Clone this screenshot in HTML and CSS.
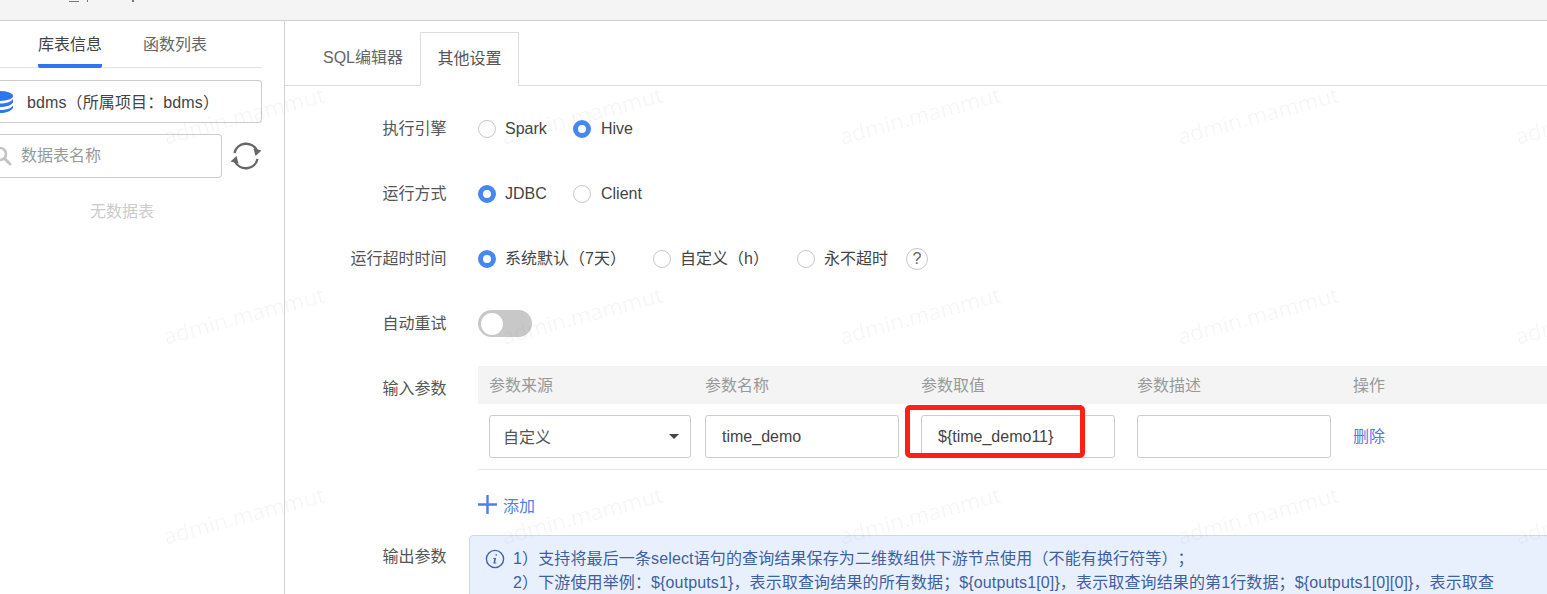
FILE: index.html
```html
<!DOCTYPE html>
<html lang="zh-CN">
<head>
<meta charset="utf-8">
<title>其他设置</title>
<link rel="stylesheet" href="styles.css">
</head>
<body>
<div class="page">
  <header class="topbar">
    <i class="mark mark-a"></i><i class="mark mark-b"></i><i class="mark mark-c"></i>
  </header>
  <div class="layout">
    <aside class="sidebar">
      <nav class="side-tabs">
        <span class="side-tab active">库表信息</span>
        <span class="side-tab">函数列表</span>
      </nav>
      <div class="db-box">
        <svg class="db-icon" viewBox="0 0 26 22" width="26" height="22"><ellipse cx="13" cy="5" rx="13" ry="5" fill="#2f74f0"/><path d="M0 8c2 3 7 4.500 13 4.500S24 11 26 8v3.500c-2 3-7 4.500-13 4.500S2 14.500 0 11.500z" fill="#2f74f0"/><path d="M0 14.500c2 3 7 4.500 13 4.500s11-1.500 13-4.500V17c-2 3-7 5-13 5S2 20 0 17z" fill="#2f74f0"/></svg>
        <span class="db-name">bdms（所属项目：bdms）</span>
      </div>
      <div class="search-row">
        <div class="search-box">
          <svg class="search-icon" viewBox="0 0 20 20" width="20" height="20"><circle cx="8" cy="8" r="6" fill="none" stroke="#c4c4c4" stroke-width="2.600"/><path d="M12.500 12.500L18 18" stroke="#c4c4c4" stroke-width="3" stroke-linecap="round"/></svg>
          <span>数据表名称</span>
        </div>
        <svg class="refresh" viewBox="0 0 32 32" width="32" height="32"><path d="M4.500 13A12 12 0 0 1 27 10.500" fill="none" stroke="#666" stroke-width="2.400"/><path d="M27.500 19A12 12 0 0 1 5 21.500" fill="none" stroke="#666" stroke-width="2.400"/><path d="M31.500 10.500L25.500 16L23.500 8.500z" fill="#666"/><path d="M0.500 21.500L6.500 16L8.500 23.500z" fill="#666"/></svg>
      </div>
      <p class="empty">无数据表</p>
    </aside>
    <main class="content">
      <nav class="main-tabs">
        <span class="main-tab">SQL编辑器</span>
        <span class="main-tab active">其他设置</span>
      </nav>
      <section class="form">
        <div class="row">
          <label class="label">执行引擎</label>
          <div class="radios">
            <span class="radio r-first"><i class="dot"></i>Spark</span>
            <span class="radio"><i class="dot on"></i>Hive</span>
          </div>
        </div>
        <div class="row">
          <label class="label">运行方式</label>
          <div class="radios">
            <span class="radio r-first"><i class="dot on"></i>JDBC</span>
            <span class="radio"><i class="dot"></i>Client</span>
          </div>
        </div>
        <div class="row">
          <label class="label">运行超时时间</label>
          <div class="radios">
            <span class="radio r-wide"><i class="dot on"></i>系统默认（7天）</span>
            <span class="radio r-wide2"><i class="dot"></i>自定义（h）</span>
            <span class="radio"><i class="dot"></i>永不超时</span>
            <span class="help">?</span>
          </div>
        </div>
        <div class="row">
          <label class="label">自动重试</label>
          <span class="switch"><i class="knob"></i></span>
        </div>
        <div class="row row-table">
          <label class="label label-table">输入参数</label>
          <div class="table">
            <div class="thead">
              <span>参数来源</span><span>参数名称</span><span>参数取值</span><span>参数描述</span><span>操作</span>
            </div>
            <div class="tbody">
              <div class="cell"><div class="field select"><span class="select-value">自定义</span><i class="caret"></i></div></div>
              <div class="cell"><div class="field">time_demo</div></div>
              <div class="cell highlight-cell"><div class="field">${time_demo11}</div><i class="redbox"></i></div>
              <div class="cell"><div class="field"></div></div>
              <div class="cell"><a class="link">删除</a></div>
            </div>
            <div class="add">
              <svg viewBox="0 0 19 19" width="19" height="19"><path d="M9.500 0v19M0 9.500h19" stroke="#4f7fe6" stroke-width="2.400"/></svg>
              <span>添加</span>
            </div>
          </div>
        </div>
        <div class="row row-output">
          <label class="label label-output">输出参数</label>
          <div class="alert">
            <svg class="info" viewBox="0 0 20 20" width="20" height="20"><circle cx="10" cy="10" r="8.600" fill="none" stroke="#3f63b5" stroke-width="1.400"/><path d="M10.600 5.200h1.300v1.500h-1.300zM8.400 9h2.700l-1 4.600h1.300v.9H8.300l1-4.600H8.200z" fill="#3f63b5"/></svg>
            <div class="alert-text">
              <p>1）支持将最后一条select语句的查询结果保存为二维数组供下游节点使用（不能有换行符等）；</p>
              <p>2）下游使用举例：${outputs1}，表示取查询结果的所有数据；${outputs1[0]}，表示取查询结果的第1行数据；${outputs1[0][0]}，表示取查</p>
            </div>
          </div>
        </div>
      </section>
    </main>
  </div>
  <div class="watermarks" aria-hidden="true">
    <span>admin.mammut</span><span>admin.mammut</span><span>admin.mammut</span><span>admin.mammut</span><span>admin.mammut</span>
    <span>admin.mammut</span><span>admin.mammut</span><span>admin.mammut</span><span>admin.mammut</span><span>admin.mammut</span>
    <span>admin.mammut</span><span>admin.mammut</span><span>admin.mammut</span><span>admin.mammut</span><span>admin.mammut</span>
  </div>
</div>
</body>
</html>
```
FILE: styles.css
```css
* { box-sizing: border-box; }
html, body { margin: 0; padding: 0; overflow: hidden; background: #fff; }
body { font: 16px/24px "Liberation Sans", "Noto Sans CJK SC", sans-serif; color: #555; text-spacing-trim: space-all; }
p { margin: 0; }
.page { position: relative; width: 1547px; height: 594px; overflow: hidden; }

.topbar { height: 21px; background: #f4f4f4; border-bottom: 1px solid #cfcfcf; display: flex; align-items: flex-start; }
.mark { display: block; background: #777; }
.mark-a { width: 10px; height: 1px; margin: 1px 8px 0 69px; }
.mark-b { width: 1px; height: 2px; margin-right: 44px; }
.mark-c { width: 2px; height: 2px; }

.layout { display: flex; height: 573px; }
.sidebar { width: 285px; flex: none; border-right: 1px solid #d2d2d2; padding-right: 22px; }
.side-tabs { display: flex; gap: 41px; height: 47px; margin-bottom: 12px; padding-left: 38px; border-bottom: 1px solid #e2e2ea; }
.side-tab { height: 46px; padding-top: 12px; color: #666; position: relative; }
.side-tab.active { color: #444; border-bottom: 4px solid #2f74f0; border-radius: 0 0 2px 2px; height: 47px; }

.db-box { height: 43px; border: 1px solid #ccc; border-left: 0; border-radius: 0 4px 4px 0; display: flex; align-items: center; gap: 14px; color: #444; margin-bottom: 11px; }
.db-icon { margin-left: -13px; flex: none; }
.db-name { padding-top: 2px; letter-spacing: 0.12px; }
.search-row { display: flex; align-items: center; gap: 8px; }
.search-box { width: 222px; height: 44px; border: 1px solid #ccc; border-left: 0; border-radius: 0 4px 4px 0; display: flex; align-items: center; gap: 9px; color: #999; }
.search-icon { margin-left: -8px; flex: none; }
.refresh { flex: none; }
.empty { margin-top: 22px; padding-right: 18px; text-align: center; color: #ccc; }

.content { flex: 1; min-width: 0; }
.main-tabs { height: 65px; display: flex; align-items: flex-end; padding-left: 38px; border-bottom: 1px solid #dcdce2; gap: 17px; }
.main-tab { height: 54px; padding-top: 15px; color: #666; }
.main-tab.active { width: 99px; height: 54px; margin-bottom: -1px; padding-top: 14px; text-align: center; color: #555; background: #fff; border: 1px solid #dcdce2; border-bottom: 0; }

.form { padding-top: 10px; }
.row { display: flex; align-items: center; height: 65px; }
.label { width: 161.5px; flex: none; margin-right: 31.5px; text-align: right; color: #555; }
.radios { display: flex; align-items: center; }
.radio { display: flex; align-items: center; color: #444; }
.r-first { width: 95px; }
.r-first + .radio .dot { margin-right: 10px; }
.r-wide { width: 175px; }
.r-wide2 { width: 144px; }
.dot { width: 18px; height: 18px; flex: none; margin-right: 9px; border: 1px solid #c8c8c8; border-radius: 50%; background: #fff; }
.dot.on { border: 5px solid #4688f1; }
.help { width: 22px; height: 22px; margin-left: 18px; border: 1px solid #c8c8c8; border-radius: 50%; text-align: center; font-size: 16px; line-height: 20px; color: #666; }

.switch { width: 54px; height: 27px; border-radius: 14px; background: #c8c8c8; display: flex; align-items: center; padding-left: 3px; }
.knob { width: 22px; height: 22px; border-radius: 50%; background: #fff; }

.row-table { height: auto; align-items: flex-start; margin-top: 10px; }
.label-table { padding-top: 11px; }
.table { flex: none; width: 1100px; }
.thead { display: grid; grid-template-columns: repeat(5, 216px); height: 38px; align-items: center; padding: 2px 0 0 11px; background: #f4f4f4; color: #999; }
.tbody { display: grid; grid-template-columns: repeat(5, 216px); height: 66px; padding: 11px 0 0 11px; border-bottom: 1px solid #e4e4e4; }
.cell { position: relative; height: 43px; display: flex; align-items: center; }
.field { width: 194px; height: 43px; padding-left: 16px; border: 1px solid #ccc; border-radius: 3px; line-height: 41px; color: #444; }
.select { width: 202px; padding: 0 11px 0 13px; display: flex; justify-content: space-between; align-items: center; color: #555; }
.select-value { padding-top: 2px; }
.caret { width: 0; height: 0; border: 5px solid transparent; border-top: 5px solid #444; border-bottom: 0; }
.link { color: #5b78e0; }
.redbox { position: absolute; left: -16px; top: -10px; width: 180px; height: 53px; border: 5px solid #ff2015; border-radius: 5px; }

.add { display: flex; align-items: center; gap: 6px; height: 24px; margin-top: 24px; color: #5480e4; }
.add svg { margin-top: -4px; }
.add span { margin-top: 2px; }

.row-output { height: auto; align-items: flex-start; margin-top: 17px; }
.label-output { margin-right: 22.5px; padding-top: 10px; }
.alert { flex: none; width: 1100px; height: 80px; padding: 11px 0 0 15px; display: flex; gap: 8px; background: #e8f0fe; border: 1px solid #c8dafa; border-radius: 4px; color: #3f5f9f; }
.alert-text { letter-spacing: 0.13px; }
.info { flex: none; margin-top: 2px; }

.watermarks { position: absolute; left: 161px; top: 94px; display: grid; grid-template-columns: repeat(5, 338px); grid-auto-rows: 200px; pointer-events: none; }
.watermarks span { display: block; width: 170px; height: 40px; font: 22px/40px "Open Sans", "Noto Sans", sans-serif; color: rgba(120, 120, 130, 0.07); white-space: nowrap; transform: rotate(-15deg); }
```
